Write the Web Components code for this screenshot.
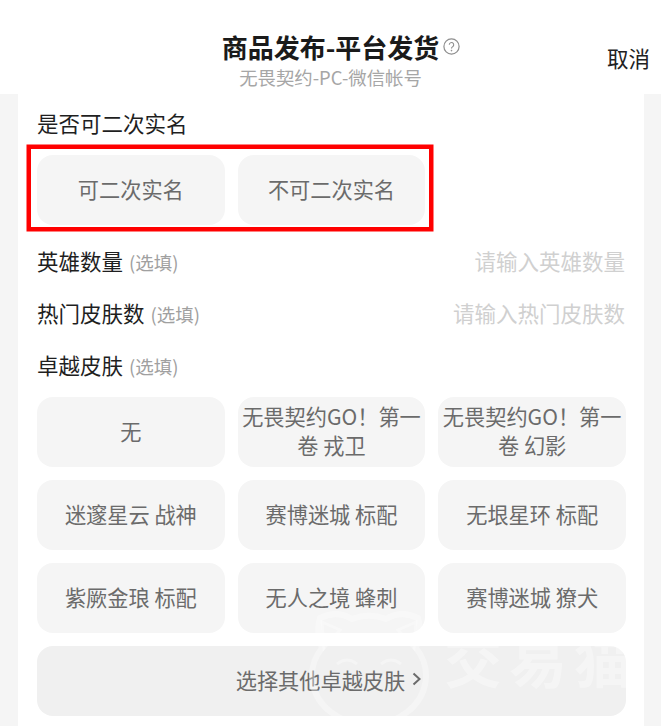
<!DOCTYPE html>
<html lang="zh">
<head>
<meta charset="utf-8">
<title>商品发布</title>
<style>
  html, body { margin: 0; padding: 0; height: 726px; overflow: hidden; background: #f5f5f5; }
  body { font-family: "Noto Sans CJK SC", "Noto Sans", sans-serif; color: #1c1c1c; position: relative; }
</style>
</head>
<body>
<template id="header-tpl">
  <style>
    :host { display: grid; grid-template-columns: 1fr auto 1fr; height: 94px; background: #fff; box-sizing: border-box; padding-top: 29px; }
    .center { grid-column: 2; display: flex; flex-direction: column; align-items: center; position: relative; }
    .title { font-size: 26px; line-height: 36px; font-weight: 700; color: #1a1a1a; }
    .sub { font-size: 18.4px; line-height: 24px; margin-top: 0; color: #a6a6a6; }
    .help { position: absolute; left: 100%; top: 9px; margin-left: 4px; width: 17px; height: 17px; }
    .cancel { justify-self: end; font-size: 21.5px; line-height: 30px; margin: 14px 11px 0 0; color: #222; }
  </style>
  <div class="center">
    <div class="title"><slot name="title"></slot></div>
    <svg class="help" viewBox="0 0 17 17" fill="none" stroke="#8e8e8e">
      <circle cx="8.5" cy="8.5" r="7.6" stroke-width="1.2"/>
      <path d="M6.3 6.8a2.2 2.2 0 1 1 3.4 1.8c-.8.5-1.2.9-1.2 1.8" stroke-width="1.1"/>
      <circle cx="8.5" cy="12.6" r=".6" fill="#8e8e8e" stroke-width=".4"/>
    </svg>
    <div class="sub"><slot name="sub"></slot></div>
  </div>
  <div class="cancel"><slot name="cancel"></slot></div>
</template>

<template id="label-tpl">
  <style>
    :host { display: flex; align-items: center; height: 52px; font-size: 21.5px; color: #1f1f1f; justify-content: space-between; }
    .text { margin-bottom: 4px; }
    .hint { font-size: 18.5px; color: #a0a0a0; margin-left: 6px; }
    .ph { font-size: 21.5px; color: #d0d0d0; margin: 0 1px 4px 0; }
  </style>
  <div class="text"><slot></slot><span class="hint"></span></div>
  <div class="ph"></div>
</template>

<template id="grid-tpl">
  <style>
    :host { display: grid; grid-template-columns: repeat(3, 1fr); gap: 13px; }
  </style>
  <slot></slot>
</template>

<template id="option-tpl">
  <style>
    :host { display: flex; align-items: center; justify-content: center; height: 70px; border-radius: 16px; background: #f5f5f5; color: #6b6b6b; font-size: 21.2px; line-height: 29px; text-align: center; box-sizing: border-box; padding: 0 2px 4px; }
    :host([wide]) { grid-column: 1 / -1; background: #f0f0f0; padding-right: 7px; }
  </style>
  <slot></slot>
</template>

<template id="form-tpl">
  <style>
    :host { display: block; margin: 0 17px 0 18px; height: 632px; background: #fff; box-sizing: border-box; padding: 4px 18px 0 19px; position: relative; }
    .mark { position: absolute; left: 8px; top: 50px; width: 408px; height: 88px; pointer-events: none; }
  </style>
  <slot></slot>
  <svg class="mark" viewBox="0 0 408 88" fill="none"><rect x="2.75" y="2.75" width="402.5" height="82.5" stroke="#ff0000" stroke-width="4.5"/></svg>
</template>

<template id="watermark-tpl">
  <style>
    :host { position: absolute; left: 300px; top: 600px; width: 340px; height: 126px; pointer-events: none; display: block; }
    svg { position: absolute; left: 4px; top: 6px; width: 130px; height: 116px; }
    .txt { position: absolute; left: 144px; top: 16px; font-size: 58px; line-height: 84px; letter-spacing: 7px; font-weight: 700; color: rgba(255,255,255,.36); white-space: nowrap; }
  </style>
  <svg viewBox="0 0 130 116" fill="none" stroke="rgba(255,255,255,.34)" stroke-width="6">
    <path d="M16 12c12-6 22-5 32 1a46 46 0 0 1 34 0c10-6 20-7 32-1 3 10 2 20-2 30a57 49 0 1 1-94 0c-4-10-5-20-2-30z"/>
    <path d="M18 16l18 8-16 18zM112 16l-18 8 16 18z" stroke-width="3"/>
    <path d="M33 58q10-8 20 0M77 58q10-8 20 0" stroke-width="3"/>
  </svg>
  <div class="txt">交易猫</div>
</template>

<script>
function define(name, tplId, onConnect) {
  class El extends HTMLElement {
    constructor() {
      super();
      const root = this.attachShadow({mode: "open"});
      root.appendChild(document.getElementById(tplId).content.cloneNode(true));
    }
    connectedCallback() {
      if (onConnect) onConnect(this, this.shadowRoot);
    }
  }
  customElements.define(name, El);
}

define("app-header", "header-tpl");
define("form-panel", "form-tpl");
define("option-grid", "grid-tpl");
define("option-btn", "option-tpl");
define("water-mark", "watermark-tpl");
define("field-row", "label-tpl", (el, root) => {
  root.querySelector(".hint").textContent = el.getAttribute("hint") || "";
  root.querySelector(".ph").textContent = el.getAttribute("placeholder") || "";
});
</script>

<app-header>
  <span slot="title">商品发布-平台发货</span>
  <span slot="sub">无畏契约-PC-微信帐号</span>
  <span slot="cancel">取消</span>
</app-header>

<form-panel>
  <field-row>是否可二次实名</field-row>
  <option-grid style="margin-top:5px">
    <option-btn>可二次实名</option-btn>
    <option-btn>不可二次实名</option-btn>
  </option-grid>
  <field-row hint="(选填)" placeholder="请输入英雄数量" style="margin-top:11px">英雄数量</field-row>
  <field-row hint="(选填)" placeholder="请输入热门皮肤数">热门皮肤数</field-row>
  <field-row hint="(选填)">卓越皮肤</field-row>
  <option-grid style="margin-top:5px">
    <option-btn>无</option-btn>
    <option-btn>无畏契约GO！第一卷 戎卫</option-btn>
    <option-btn>无畏契约GO！第一卷 幻影</option-btn>
    <option-btn>迷邃星云 战神</option-btn>
    <option-btn>赛博迷城 标配</option-btn>
    <option-btn>无垠星环 标配</option-btn>
    <option-btn>紫厥金琅 标配</option-btn>
    <option-btn>无人之境 蜂刺</option-btn>
    <option-btn>赛博迷城 獠犬</option-btn>
    <option-btn wide>选择其他卓越皮肤<svg viewBox="0 0 10 16" fill="none" stroke="#6b6b6b" stroke-width="2" style="width:10px;height:16px;margin-left:7px"><path d="M1.5 2.5l6 5.5-6 5.5"/></svg></option-btn>
  </option-grid>
</form-panel>

<water-mark></water-mark>
</body>
</html>
